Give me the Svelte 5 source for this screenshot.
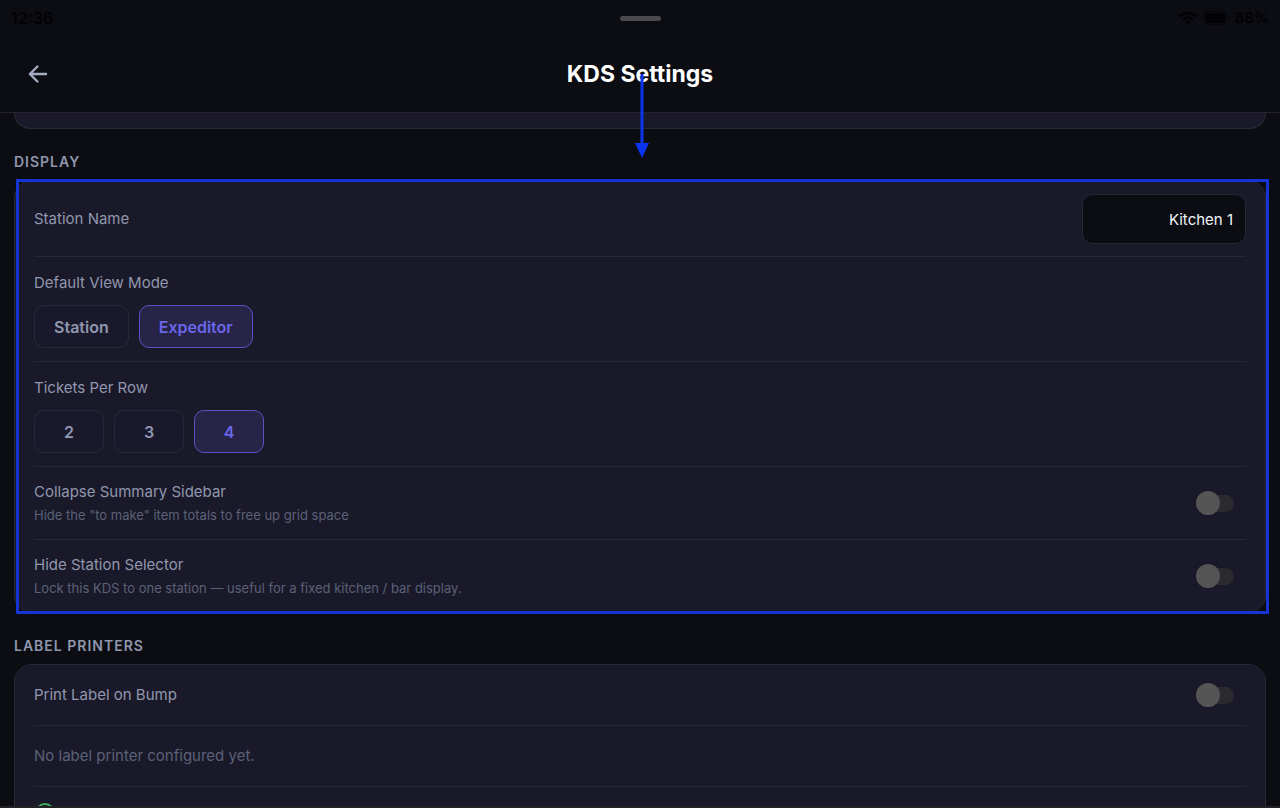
<script lang="ts">
  let stationName = $state('Kitchen 1');
  let viewMode = $state('Expeditor');
  let ticketsPerRow = $state(4);
  let collapseSidebar = $state(false);
  let hideSelector = $state(false);
  let printOnBump = $state(false);

  const viewModes = ['Station', 'Expeditor'];
  const rowOptions = [2, 3, 4];
</script>

<div class="screen">
  <div class="status-bar">
    <span>12:36</span>
    <span class="grabber"></span>
    <div class="status-right">
      <svg width="20" height="15" viewBox="0 0 20 15" fill="none" stroke="currentColor" stroke-width="2.4">
        <path d="M1.5 5.4a12.4 12.4 0 0 1 17 0" />
        <path d="M4.6 8.7a7.8 7.8 0 0 1 10.8 0" />
        <path d="M7.2 11.2a4 4 0 0 1 5.6 0L10 14z" fill="currentColor" stroke="none" />
      </svg>
      <svg width="27" height="14" viewBox="0 0 27 14">
        <rect x="0.5" y="0.5" width="23" height="13" rx="4" fill="none" stroke="currentColor" opacity="0.5" />
        <rect x="2" y="2" width="20" height="10" rx="2.5" fill="currentColor" />
        <path d="M25 4.5c1.6.6 1.6 4.4 0 5z" fill="currentColor" opacity="0.5" />
      </svg>
      <span class="battery-level">88%</span>
    </div>
  </div>

  <header class="header">
    <button class="back" aria-label="Back">
      <svg width="20" height="18" viewBox="0 0 20 18" fill="none" stroke="currentColor" stroke-width="2.4" stroke-linecap="round" stroke-linejoin="round">
        <path d="M18 9H2M9.4 1.5L1.9 9L9.4 16.5" />
      </svg>
    </button>
    <h1>KDS Settings</h1>
    <svg class="arrow" width="14" height="84" viewBox="0 0 14 84">
      <path d="M7 0V71" stroke="#0a35ee" stroke-width="3" />
      <path d="M0 69H14L7 84z" fill="#0a35ee" />
    </svg>
  </header>

  <main class="content">
    <div class="card card-tail"></div>

    <section>
      <h2>DISPLAY</h2>
      <div class="highlighted">
        <div class="card">
          <div class="row name-row">
            <label for="station-name">Station Name</label>
            <input id="station-name" class="text-input" type="text" bind:value={stationName} />
          </div>

          <div class="row option-row">
            <span class="label">Default View Mode</span>
            <div class="chips">
              {#each viewModes as mode}
                <button class="chip" class:active={viewMode === mode} onclick={() => (viewMode = mode)}>{mode}</button>
              {/each}
            </div>
          </div>

          <div class="row option-row">
            <span class="label">Tickets Per Row</span>
            <div class="chips">
              {#each rowOptions as count}
                <button class="chip count" class:active={ticketsPerRow === count} onclick={() => (ticketsPerRow = count)}>{count}</button>
              {/each}
            </div>
          </div>

          <div class="row toggle-row">
            <label for="collapse-sidebar">
              Collapse Summary Sidebar
              <small>Hide the "to make" item totals to free up grid space</small>
            </label>
            <input id="collapse-sidebar" class="switch" type="checkbox" bind:checked={collapseSidebar} />
          </div>

          <div class="row toggle-row">
            <label for="hide-selector">
              Hide Station Selector
              <small>Lock this KDS to one station — useful for a fixed kitchen / bar display.</small>
            </label>
            <input id="hide-selector" class="switch" type="checkbox" bind:checked={hideSelector} />
          </div>
        </div>
      </div>
    </section>

    <section>
      <h2>LABEL PRINTERS</h2>
      <div class="card">
        <div class="row short-row">
          <label for="print-bump">Print Label on Bump</label>
          <input id="print-bump" class="switch" type="checkbox" bind:checked={printOnBump} />
        </div>
        <div class="row short-row">
          <p class="empty">No label printer configured yet.</p>
        </div>
        <div class="row add-row">
          <svg width="22" height="22" viewBox="0 0 22 22" fill="none" stroke="#3fae5d" stroke-width="2" stroke-linecap="round">
            <circle cx="11" cy="11" r="9" />
            <path d="M11 7v8M7 11h8" />
          </svg>
        </div>
      </div>
    </section>
  </main>
</div>

<style>
  :global(body) {
    background: #0c0d13;
  }

  .screen {
    display: flex;
    flex-direction: column;
    height: 100vh;
    box-sizing: border-box;
    overflow: hidden;
    border-bottom: 2px solid #232325;
    background: #0c0d13;
    color: #9097ae;
    font-family: Inter, sans-serif;
    font-size: 15px;
    line-height: 20px;
  }

  .status-bar {
    display: grid;
    grid-template-columns: 1fr auto 1fr;
    align-items: center;
    height: 36px;
    padding: 0 11px;
    flex-shrink: 0;
    color: #020204;
    font-weight: 600;
    font-size: 16px;
  }

  .grabber {
    width: 41px;
    height: 5px;
    border-radius: 3px;
    background: #4a4a4e;
  }

  .status-right {
    display: flex;
    align-items: center;
    justify-content: flex-end;
    gap: 5px;
  }

  .battery-level {
    font-size: 15px;
  }

  .header {
    position: relative;
    z-index: 2;
    display: grid;
    grid-template-columns: 48px 1fr 48px;
    align-items: center;
    height: 76px;
    padding: 0 14px;
    flex-shrink: 0;
    border-bottom: 1px solid #222228;
  }

  .back {
    display: flex;
    align-items: center;
    justify-content: center;
    width: 48px;
    height: 48px;
    padding: 0;
    border: none;
    background: none;
    color: #a4adc4;
    cursor: pointer;
  }

  h1 {
    margin: 0;
    color: #ffffff;
    font-size: 23px;
    font-weight: 700;
    line-height: 28px;
    text-align: center;
  }

  .arrow {
    position: absolute;
    top: 38px;
    left: calc(50% - 5px);
  }

  .content {
    flex: 1;
    min-height: 0;
    padding: 0 14px;
    overflow: hidden;
  }

  .card {
    padding: 0 19px;
    border: 1px solid #292935;
    border-radius: 18px;
    background: #1a1929;
  }

  /* bottom edge of the section scrolled under the header */
  .card-tail {
    height: 15px;
    border-top: none;
    border-radius: 0 0 18px 18px;
  }

  section {
    margin-top: 23px;
  }

  h2 {
    margin: 0 0 8px;
    font-size: 14px;
    font-weight: 600;
    line-height: 20px;
    letter-spacing: 1px;
  }

  .highlighted {
    position: relative;
  }

  .highlighted::after {
    content: '';
    position: absolute;
    inset: -1px -3px -1px 2px;
    border: 3px solid #1434d6;
    pointer-events: none;
  }

  .row {
    border-bottom: 1px solid #282735;
  }

  .row:last-child {
    border-bottom: none;
  }

  .name-row,
  .toggle-row,
  .short-row {
    display: flex;
    align-items: center;
    justify-content: space-between;
  }

  .name-row {
    padding: 13px 0 12px;
  }

  .toggle-row {
    height: 72px;
  }

  .short-row {
    height: 60px;
  }

  .option-row {
    padding: 16px 0 13px;
  }

  .label,
  small {
    display: block;
  }

  small {
    margin-top: 3px;
    color: #5b6178;
    font-size: 13px;
  }

  .text-input {
    box-sizing: border-box;
    width: 164px;
    height: 50px;
    padding: 0 12px;
    border: 1px solid #292935;
    border-radius: 10px;
    background: #0c0d13;
    color: #f2f3f8;
    font: inherit;
    text-align: right;
  }

  .chips {
    display: flex;
    gap: 10px;
    margin-top: 12px;
  }

  .chip {
    height: 43px;
    padding: 0 19px;
    border: 1px solid #292937;
    border-radius: 10px;
    background: #1a192c;
    color: #9097ae;
    font: inherit;
    font-size: 16px;
    font-weight: 600;
    cursor: pointer;
  }

  .chip.count {
    width: 70px;
  }

  .chip.active {
    border-color: #5a52c4;
    background: #272447;
    color: #6a66ea;
  }

  /* track and thumb share one grid cell */
  .switch {
    appearance: none;
    display: grid;
    align-items: center;
    width: 38px;
    height: 24px;
    margin: 0 12px 0 0;
    cursor: pointer;
  }

  .switch::before,
  .switch::after {
    content: '';
    grid-area: 1 / 1;
  }

  .switch::before {
    height: 17px;
    margin-left: 4px;
    border-radius: 9px;
    background: #2b2b2f;
  }

  .switch::after {
    width: 24px;
    height: 24px;
    border-radius: 50%;
    background: #565555;
  }

  .switch:checked::after {
    justify-self: end;
    background: #6a66ea;
  }

  .empty {
    margin: 0;
    color: #5b6178;
  }

  .add-row {
    height: 56px;
    padding-top: 15px;
  }

  .add-row svg {
    display: block;
  }
</style>
